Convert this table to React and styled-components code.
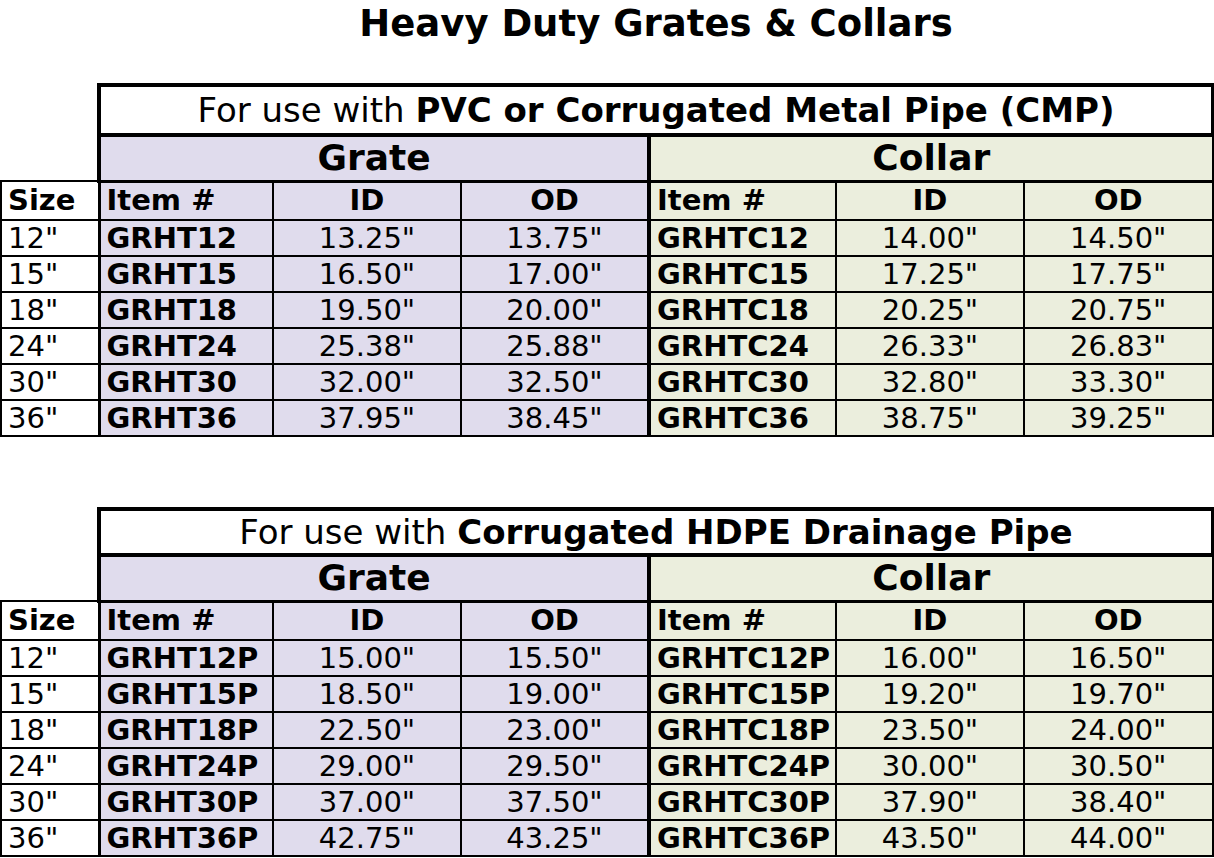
import React from "react";
import styled, { createGlobalStyle } from "styled-components";

const LAV = "#e0dced";
const GRN = "#ebeedd";
const THIN = "2px solid #000";
const MID = "3px solid #000";
const THICK = "4px solid #000";

const tables = [
  {
    use: "PVC or Corrugated Metal Pipe (CMP)",
    headH: 50,
    rows: [
      ["12\"", "GRHT12", "13.25\"", "13.75\"", "GRHTC12", "14.00\"", "14.50\""],
      ["15\"", "GRHT15", "16.50\"", "17.00\"", "GRHTC15", "17.25\"", "17.75\""],
      ["18\"", "GRHT18", "19.50\"", "20.00\"", "GRHTC18", "20.25\"", "20.75\""],
      ["24\"", "GRHT24", "25.38\"", "25.88\"", "GRHTC24", "26.33\"", "26.83\""],
      ["30\"", "GRHT30", "32.00\"", "32.50\"", "GRHTC30", "32.80\"", "33.30\""],
      ["36\"", "GRHT36", "37.95\"", "38.45\"", "GRHTC36", "38.75\"", "39.25\""],
    ],
  },
  {
    use: "Corrugated HDPE Drainage Pipe",
    headH: 46,
    rows: [
      ["12\"", "GRHT12P", "15.00\"", "15.50\"", "GRHTC12P", "16.00\"", "16.50\""],
      ["15\"", "GRHT15P", "18.50\"", "19.00\"", "GRHTC15P", "19.20\"", "19.70\""],
      ["18\"", "GRHT18P", "22.50\"", "23.00\"", "GRHTC18P", "23.50\"", "24.00\""],
      ["24\"", "GRHT24P", "29.00\"", "29.50\"", "GRHTC24P", "30.00\"", "30.50\""],
      ["30\"", "GRHT30P", "37.00\"", "37.50\"", "GRHTC30P", "37.90\"", "38.40\""],
      ["36\"", "GRHT36P", "42.75\"", "43.25\"", "GRHTC36P", "43.50\"", "44.00\""],
    ],
  },
];

const GlobalStyle = createGlobalStyle`
  body {
    margin: 0;
    background: #fff;
    font-family: "DejaVu Sans", Verdana, sans-serif;
    color: #000;
  }
`;

const Page = styled.div`
  width: 1214px;
  padding-top: 4px;
`;

const Title = styled.h1`
  margin: 0 0 0 98px;
  width: 1116px;
  text-align: center;
  font-size: 37px;
  font-weight: bold;
  line-height: 40px;
`;

const Stack = styled.div`
  display: flex;
  flex-direction: column;
  gap: 70px;
  margin-top: 39px;
`;

const Sheet = styled.table`
  width: 1212px;
  border-collapse: collapse;
  table-layout: fixed;
`;

const Row = styled.tr`
  height: ${(p) => p.$h}px;
`;

const Cell = styled.td`
  padding: 0 ${(p) => (p.$align === "left" ? "6px" : "0")};
  background: ${(p) => p.$bg || "#fff"};
  text-align: ${(p) => p.$align || "center"};
  font-size: ${(p) => p.$size || 29}px;
  font-weight: ${(p) => (p.$bold ? "bold" : "normal")};
  line-height: 1;
  white-space: nowrap;
  overflow: hidden;
  vertical-align: middle;
  border: ${THIN};
  border-left: ${(p) => p.$left || THIN};
  border-right: ${(p) => p.$right || THIN};
  border-top: ${(p) => p.$top || THIN};
  border-bottom: ${(p) => p.$bottom || THIN};
`;

const Corner = styled.td`
  border: none;
  padding: 0;
`;

const UseCell = styled(Cell)`
  font-size: 34px;
  b {
    font-weight: bold;
  }
`;

const colWidths = [98, 174, 188, 188, 187, 188, 189];

function SizeTable({ t }) {
  return (
    <Sheet>
      <colgroup>
        {colWidths.map((w, i) => (
          <col key={i} style={{ width: w }} />
        ))}
      </colgroup>
      <tbody>
        <Row $h={t.headH}>
          <Corner />
          <UseCell colSpan={6} $left={THICK} $right={THICK} $top={THICK} $bottom={THICK}>
            For use with <b>{t.use}</b>
          </UseCell>
        </Row>
        <Row $h={46}>
          <Corner />
          <Cell colSpan={3} $bg={LAV} $bold $size={36} $left={THICK} $right={THICK} $bottom={MID}>
            Grate
          </Cell>
          <Cell colSpan={3} $bg={GRN} $bold $size={36} $right={MID} $bottom={MID}>
            Collar
          </Cell>
        </Row>
        <Row $h={39}>
          <Cell $bold $align="left">Size</Cell>
          <Cell $bg={LAV} $bold $align="left" $left={MID}>Item #</Cell>
          <Cell $bg={LAV} $bold>ID</Cell>
          <Cell $bg={LAV} $bold $right={THICK}>OD</Cell>
          <Cell $bg={GRN} $bold $align="left">Item #</Cell>
          <Cell $bg={GRN} $bold>ID</Cell>
          <Cell $bg={GRN} $bold $right={MID}>OD</Cell>
        </Row>
        {t.rows.map((r) => (
          <Row $h={36} key={r[1]}>
            <Cell $align="left">{r[0]}</Cell>
            <Cell $bg={LAV} $bold $align="left" $left={MID}>{r[1]}</Cell>
            <Cell $bg={LAV}>{r[2]}</Cell>
            <Cell $bg={LAV} $right={THICK}>{r[3]}</Cell>
            <Cell $bg={GRN} $bold $align="left">{r[4]}</Cell>
            <Cell $bg={GRN}>{r[5]}</Cell>
            <Cell $bg={GRN} $right={MID}>{r[6]}</Cell>
          </Row>
        ))}
      </tbody>
    </Sheet>
  );
}

export default function App() {
  return (
    <Page>
      <GlobalStyle />
      <Title>Heavy Duty Grates &amp; Collars</Title>
      <Stack>
        {tables.map((t) => (
          <SizeTable key={t.use} t={t} />
        ))}
      </Stack>
    </Page>
  );
}
